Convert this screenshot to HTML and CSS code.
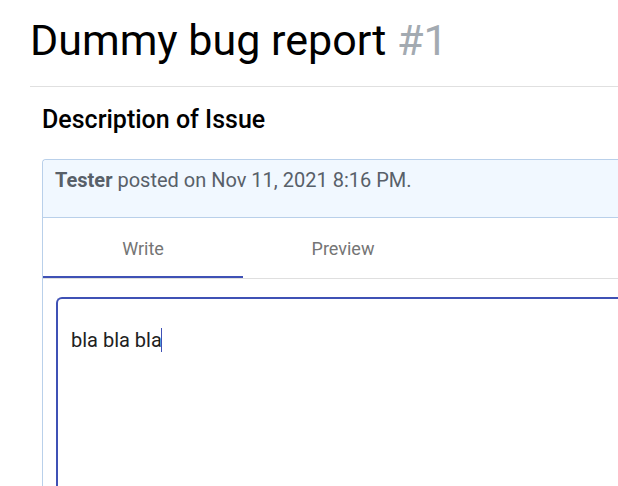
FILE: index.html
```html
<!DOCTYPE html>
<html lang="en">
<head>
<meta charset="utf-8">
<title>Dummy bug report #1</title>
<link rel="stylesheet" href="styles.css">
</head>
<body>
<main class="page">
  <header class="title-bar">
    <h1 class="title">Dummy bug report <span class="issue-id">#1</span></h1>
  </header>
  <section class="issue">
    <h2 class="section-title">Description of Issue</h2>
    <article class="card">
      <p class="card-header"><strong>Tester</strong> posted on Nov 11, 2021 8:16 PM.</p>
      <div class="tabs" role="tablist">
        <button class="tab active" type="button" role="tab" aria-selected="true">Write</button>
        <button class="tab" type="button" role="tab" aria-selected="false">Preview</button>
      </div>
      <div class="editor">
        <textarea class="field" aria-label="Issue description" autofocus>bla bla bla</textarea>
        <span class="caret" aria-hidden="true"></span>
      </div>
    </article>
  </section>
</main>
</body>
</html>
```
FILE: styles.css
```css
* {
  box-sizing: border-box;
}

body {
  margin: 0;
  background: #fff;
  color: #000;
  font-family: Roboto, sans-serif;
}

.page {
  display: flex;
  flex-direction: column;
  min-height: 100vh;
  padding-left: 30px;
}

.title-bar {
  padding: 12px 0 18px;
  border-bottom: 1px solid #e0e0e0;
}

.title {
  margin: 0;
  font-size: 43px;
  font-weight: 400;
  line-height: 56px;
}

.issue-id {
  color: #a3aab1;
}

.issue {
  display: flex;
  flex: 1;
  flex-direction: column;
  padding: 16px 0 0 12px;
}

.section-title {
  margin: 0 0 22px;
  font-size: 25px;
  font-weight: 500;
  line-height: 34px;
}

.card {
  display: flex;
  flex: 1;
  flex-direction: column;
  border: 1px solid #b9d0ea;
  border-width: 1px 0 0 1px;
  border-radius: 4px 0 0 0;
}

.card-header {
  height: 58px;
  margin: 0;
  padding: 8px 12px;
  border-bottom: 1px solid #b9d0ea;
  border-radius: 4px 0 0 0;
  background: #f1f8ff;
  color: #586069;
  font-size: 20px;
  line-height: 24px;
}

.tabs {
  display: flex;
  height: 61px;
  border-bottom: 1px solid #dfdfdf;
}

.tab {
  width: 200px;
  height: 60px;
  padding: 4px 0 0;
  border: 0;
  border-bottom: 2px solid transparent;
  background: none;
  color: #757575;
  font: 400 18px/24px Roboto, sans-serif;
}

.tab.active {
  border-color: #3f51b5;
}

.editor {
  position: relative;
  display: flex;
  flex: 1;
  padding: 18px 0 0 13px;
}

.field {
  width: 100%;
  min-height: 160px;
  padding: 28px 13px;
  border: 2px solid #3f51b5;
  border-width: 2px 0 0 2px;
  border-radius: 6px 0 0 0;
  outline: 0;
  background: #fff;
  caret-color: transparent;
  color: #212121;
  font: 400 20px/26px Roboto, sans-serif;
  resize: none;
}

.caret {
  position: absolute;
  top: 49px;
  left: 118px;
  width: 1px;
  height: 24px;
  background: #3f51b5;
}
```
